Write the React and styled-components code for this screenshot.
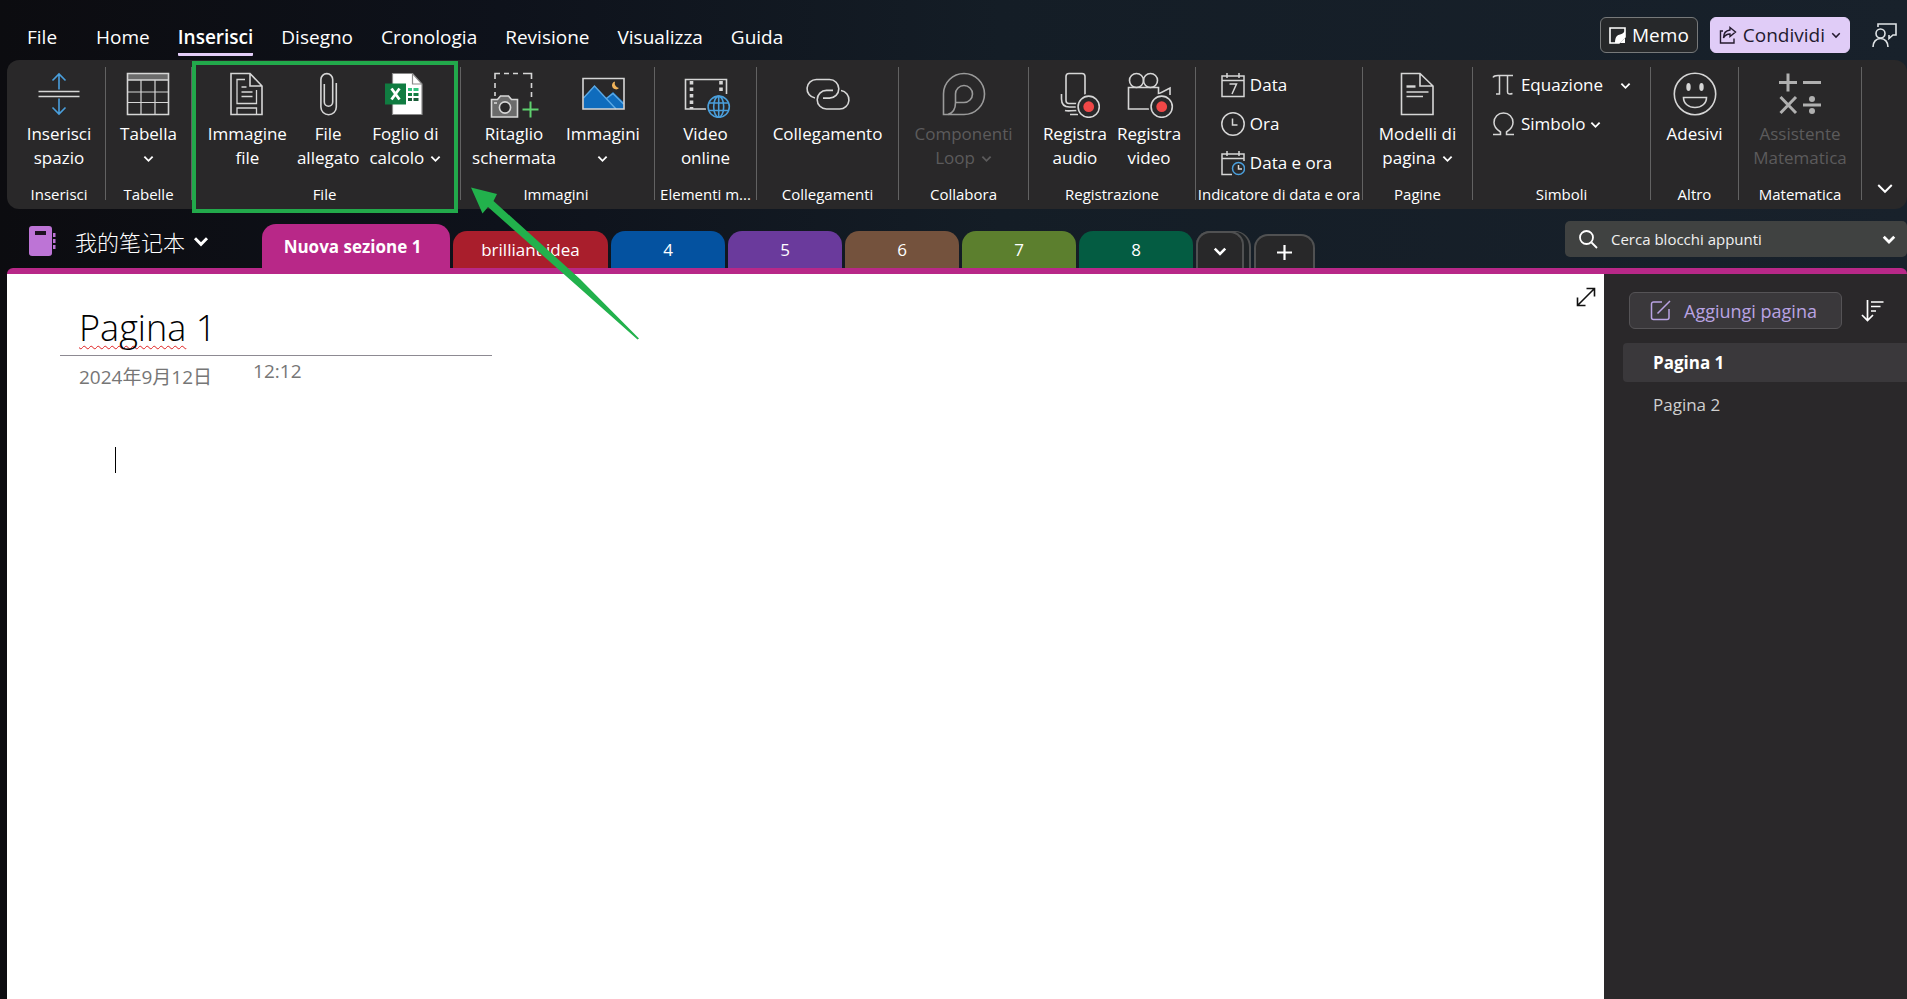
import React from 'react'
import styled, {createGlobalStyle} from 'styled-components'

const GlobalStyle = createGlobalStyle`
    * {
        box-sizing: border-box;
    }

    body {
        margin: 0;
        background: linear-gradient(90deg, #0c0c10 0, #0e121b 500px, #141d26 1000px, #18212b 1907px);
        font-family: "Open Sans", "Noto Sans", "Noto Sans CJK SC", sans-serif;
        color: #fff;
    }

    button, input {
        font: inherit;
        color: inherit;
        border: 0;
        background: none;
        padding: 0;
        margin: 0;
    }

    svg {
        display: block;
        flex: none;
    }
`

/* ---------- icons ---------- */

const Chevron = ({size = 12, weight = 2}) => (
    <svg width={size} height={size} viewBox="0 0 12 12" fill="none" stroke="currentColor" strokeWidth={weight}>
        <path d="M1.5 4 6 8.5 10.5 4"/>
    </svg>
)

const BigIcon = ({children, color = '#d6d6d6'}) => (
    <svg width="50" height="46" viewBox="-1 0 50 46" fill="none" stroke={color} strokeWidth="1.6">
        {children}
    </svg>
)

const SmallIcon = ({children}) => (
    <svg width="24" height="26" viewBox="0 0 24 26" fill="none" stroke="#d6d6d6" strokeWidth="1.5">
        {children}
    </svg>
)

const RecordDot = ({cx}) => (
    <g>
        <circle cx={cx} cy="34.7" r="13" fill="#292829" stroke="none"/>
        <circle cx={cx} cy="34.7" r="10.6"/>
        <circle cx={cx} cy="34.7" r="5.4" fill="#f04747" stroke="none"/>
    </g>
)

const SpaceIcon = () => (
    <BigIcon>
        <path d="M3.5 19.5h41M3.5 24.5h41"/>
        <path stroke="#4a9fdc" d="M24 17.500V2M17.500 8.500 24 2l6.500 6.500M24 26.500V42M17.500 35.500 24 42l6.500-6.500"/>
    </BigIcon>
)

const TableIcon = () => (
    <BigIcon>
        <path d="M4 2h40v6H4z" fill="#6b6b6b" stroke="none"/>
        <path strokeWidth="1.2" d="M17 8v34M31 8v34M4 20h40M4 30.500h40"/>
        <path d="M3.500 1.500h41v41h-41zM3.500 8h41"/>
    </BigIcon>
)

const PrintoutIcon = () => (
    <BigIcon>
        <path d="M8 1.500h19L39 14v28.500H8zM27 1.500V14h12"/>
        <path strokeWidth="1.300" d="M22 7.500h-8v24h19.500V18M18.500 15h5M18.500 20h11M18.500 24.500h11M14 42v-6h19.500v6"/>
    </BigIcon>
)

const ClipIcon = () => (
    <BigIcon>
        <path d="M32.300 11v24a7.700 7.700 0 0 1-15.400 0V7.500a5.900 5.900 0 0 1 11.800 0V30a4.200 4.200 0 0 1-8.400 0V12"/>
    </BigIcon>
)

const ExcelIcon = () => (
    <BigIcon>
        <path d="M11.500 1.500h20L41 12v30.500H11.500z" fill="#fff" stroke="#8a8a8a" strokeWidth="1.200"/>
        <path d="M31.500 1.500V12H41" stroke="#8a8a8a" strokeWidth="1.200"/>
        <path d="M27 17.500h4M32.500 17.500h5" stroke="#33c481" strokeWidth="3"/>
        <path d="M27 22.500h4M32.500 22.500h5" stroke="#107c41" strokeWidth="3"/>
        <path d="M27 27.500h4M32.500 27.500h5" stroke="#185c37" strokeWidth="3"/>
        <path d="M4 11.500h21v21H4z" fill="#107c41" stroke="none"/>
        <path d="M10.500 16.500l8 11M18.500 16.500l-8 11" stroke="#fff" strokeWidth="2.800"/>
    </BigIcon>
)

const ClippingIcon = () => (
    <BigIcon>
        <path d="M5 7V1.500h5M14 1.500h5M23 1.500h5M33 1.500h8.500V7M5 11v5M5 20v4M41.500 11v5M41.500 20v5"/>
        <path d="M1.500 27.500h6l3-3.500h8l3 3.500h6v17.500h-26z" fill="#6b6b6b"/>
        <circle cx="15" cy="35.500" r="5.600" fill="#292829"/>
        <path d="M4 31h3"/>
        <path stroke="#5fd16f" strokeWidth="2" d="M40.500 29.500v16M32.500 37.500h16"/>
    </BigIcon>
)

const PictureIcon = () => (
    <BigIcon>
        <path d="M4.500 26 15.500 14 27 26l7-6 10.500 10v7h-40z" fill="#0f6cbd" stroke="none"/>
        <path d="M4.500 26 15.500 14 37 37M27.500 26.500l6.500-5L44.500 32" stroke="#5aa9e6" strokeWidth="1.400"/>
        <path d="M36 9.500a4 4 0 1 0 4 6.500 5 5 0 0 1-4-6.500z" fill="#f0b35a" stroke="none"/>
        <path d="M4 6.500h41V37H4z"/>
    </BigIcon>
)

const OnlineVideoIcon = () => (
    <BigIcon>
        <path d="M44.500 22V7.500h-41V37H24"/>
        <path d="M9.500 9v28" strokeWidth="3.600" strokeDasharray="3.500 3"/>
        <path d="M39 9v12" strokeWidth="3.600" strokeDasharray="3.500 3"/>
        <circle cx="36.700" cy="34.700" r="13" fill="#292829" stroke="none"/>
        <g stroke="#4a9fdc">
            <circle cx="36.700" cy="34.700" r="10.600"/>
            <ellipse cx="36.700" cy="34.700" rx="5" ry="10.600"/>
            <path d="M36.700 24v21.400M27 31h19.400M27 38.500h19.400"/>
        </g>
    </BigIcon>
)

const LinkIcon = () => (
    <BigIcon>
        <path d="M11 26A9.300 9.300 0 0 1 12.500 7.500h13a9.300 9.300 0 0 1 0 18.600H19"/>
        <path d="M37 18.500a9.300 9.300 0 0 1-1.500 18.500h-13a9.300 9.300 0 0 1 0-18.600H29"/>
    </BigIcon>
)

const LoopIcon = () => (
    <BigIcon color="#9a9a9a">
        <path d="M3.500 42.500V22A20.500 20.500 0 1 1 24 42.500z"/>
        <path d="M24 30.500h-8.500V22A8.500 8.500 0 1 1 24 30.500M15.500 30.500C15.500 36 13 41 8 42.500"/>
    </BigIcon>
)

const AudioIcon = () => (
    <BigIcon>
        <rect x="15" y="1.500" width="19" height="30" rx="3"/>
        <path d="M10.500 22v5c0 5 3 8 8 8H27M14 38.500c3 1 6 0 12 0M19 42.500h8"/>
        <RecordDot cx={37.7}/>
    </BigIcon>
)

const VideoIcon = () => (
    <BigIcon>
        <circle cx="11.500" cy="8.500" r="7"/>
        <circle cx="25.500" cy="8.500" r="7"/>
        <path d="M24 37H3.500V15.500h30V22L45 16v7"/>
        <RecordDot cx={36.7}/>
    </BigIcon>
)

const TemplateIcon = () => (
    <BigIcon>
        <path d="M8.500 1.500H27L40 14v28.500H8.500zM27 1.500V14h13"/>
        <path d="M13.500 14.500h9" strokeWidth="2.400"/>
        <path d="M13.500 20h22M13.500 24.500H30" strokeWidth="1.300"/>
    </BigIcon>
)

const StickerIcon = () => (
    <BigIcon>
        <circle cx="24" cy="22" r="20.700"/>
        <ellipse cx="17.500" cy="15" rx="2.200" ry="4" fill="#d6d6d6" stroke="none"/>
        <ellipse cx="30.500" cy="15" rx="2.200" ry="4" fill="#d6d6d6" stroke="none"/>
        <path d="M12.500 25.500h23c0 6-5 10-11.500 10s-11.500-4-11.500-10z"/>
    </BigIcon>
)

const MathIcon = () => (
    <BigIcon color="#b0b0b0">
        <g strokeWidth="3">
            <path d="M12 1.500v18M3 10.500h18M27 10.500h18M4.500 25 20 41M20 25 4.500 41M27 33h18"/>
        </g>
        <circle cx="36" cy="27" r="3" fill="#b0b0b0" stroke="none"/>
        <circle cx="36" cy="39" r="3" fill="#b0b0b0" stroke="none"/>
    </BigIcon>
)

const DateIcon = () => (
    <SmallIcon>
        <path d="M1 4h22v20.500H1zM1 8.500h22M6 1v5M18 1v5M8.500 12h7l-4.500 10"/>
    </SmallIcon>
)

const ClockIcon = () => (
    <SmallIcon>
        <circle cx="12" cy="13" r="11.200"/>
        <path d="M11.500 7.500v6.500h5"/>
    </SmallIcon>
)

const DateTimeIcon = () => (
    <SmallIcon>
        <path d="M11 24.500H1V4h22v7M1 8.500h22M6 1v5M18 1v5"/>
        <circle cx="17.500" cy="18.500" r="6" stroke="#4a9fdc"/>
        <path d="M17.500 15v4h3.500"/>
    </SmallIcon>
)

const PiIcon = () => (
    <SmallIcon>
        <path d="M1 5.500C2 3.500 4 3.500 6 3.500h15M7.500 3.500V22H4M15.500 3.500V20c0 2 2 2.500 5 1.500"/>
    </SmallIcon>
)

const OmegaIcon = () => (
    <SmallIcon>
        <path d="M1 23.500h7.500V21C4.500 18.500 2 15.500 2 11.500c0-5.500 4-9.500 9.500-9.500S21 6 21 11.500c0 4-2.500 7-6.500 9.500v2.500H22"/>
    </SmallIcon>
)

const MemoIcon = () => (
    <svg width="17" height="17" viewBox="0 0 17 17">
        <path d="M1 1h15v9l-6 6H1z" fill="none" stroke="#fff" strokeWidth="1.600"/>
        <path d="M16 4v6l-6 6H6C6 9 9 8 11 7.500S15 5.500 16 4z" fill="#fff"/>
        <path d="M16 11v5h-5z" fill="#fff"/>
    </svg>
)

const ShareIcon = () => (
    <svg width="18" height="18" viewBox="0 0 18 18" fill="none" stroke="currentColor" strokeWidth="1.400">
        <path d="M4 5H1.500v12h13.500v-4.500"/>
        <path d="M11 1.500 16.500 6 11 10.500V8C8 8 6 9 4.500 12 4.500 7.500 7 4.500 11 4z"/>
    </svg>
)

const PresenceIcon = () => (
    <svg width="25" height="25" viewBox="0 0 25 25" fill="none" stroke="#dfe3e6" strokeWidth="1.600">
        <path d="M6 4V1h18v11h-3l-4 3.500V12"/>
        <circle cx="8.500" cy="10.500" r="4.500"/>
        <path d="M1 24c0-5 3-8.500 7.500-8.500S16 19 16 24"/>
    </svg>
)

const NotebookIcon = () => (
    <svg width="27" height="30" viewBox="0 0 27 30">
        <rect width="23" height="30" rx="3" fill="#bd74d6"/>
        <rect x="6" y="5" width="11" height="4" fill="#1c1220"/>
        <path d="M24 7h2.500v4H24zM24 13h2.500v4H24zM24 19h2.500v4H24z" fill="#bd74d6"/>
    </svg>
)

const SearchIcon = () => (
    <svg width="19" height="19" viewBox="0 0 19 19" fill="none" stroke="#fff" strokeWidth="1.800">
        <circle cx="7.500" cy="7.500" r="6.500"/>
        <path d="M12.500 12.500 18 18"/>
    </svg>
)

const ExpandIcon = () => (
    <svg width="20" height="20" viewBox="0 0 20 20" fill="none" stroke="#111" strokeWidth="1.600">
        <path d="M1.500 18.500 18.500 1.500M10.500 1.500h8v8M1.500 10.500v8h8"/>
    </svg>
)

const ComposeIcon = () => (
    <svg width="21" height="21" viewBox="0 0 21 21" fill="none" stroke="#b9a3e3" strokeWidth="1.500">
        <path d="M12 2H3.500A2 2 0 0 0 1.500 4v13.500a2 2 0 0 0 2 2H17a2 2 0 0 0 2-2V9M7.500 13.500 20 1"/>
    </svg>
)

const SortIcon = () => (
    <svg width="23" height="22" viewBox="0 0 23 22" fill="none" stroke="#fff" strokeWidth="1.700">
        <path d="M6.500 0v20.500M1 15l5.500 5.500L12 15M10 2h12.500M10 6.500h9.500M10 11h5"/>
    </svg>
)

/* ---------- top bar ---------- */

const TopBar = styled.header`
    display: flex;
    align-items: center;
    height: 60px;
    padding: 10px 10px 0 27px;
`

const Menu = styled.nav`
    display: flex;
    gap: 28px;
    flex-grow: 1;
    align-self: flex-start;
    margin-top: 11px;
`

const MenuItem = styled.button`
    height: 35px;
    font-size: 19px;
    line-height: 31px;
    border-bottom: 3px solid ${p => p.$active ? '#e3cdf8' : 'transparent'};
    border-radius: 1px;
    font-weight: ${p => p.$active ? 600 : 400};

    &:first-child {
        margin-right: 11px;
    }
`

const TopButton = styled.button`
    display: flex;
    align-items: center;
    gap: 6px;
    height: 36px;
    margin-right: 12px;
    padding: 0 8px;
    border: 1px solid ${p => p.$primary ? '#e3cdf8' : '#77797a'};
    border-radius: 6px;
    background: ${p => p.$primary ? '#e0ccf7' : '#26282a'};
    color: ${p => p.$primary ? '#241a2e' : '#fff'};
    font-size: 19px;
    line-height: 24px;
`

const PresenceButton = styled.button`
    margin-left: 10px;
`

/* ---------- ribbon ---------- */

const RibbonBar = styled.section`
    display: flex;
    margin-left: 7px;
    padding-left: 6px;
    height: 149px;
    border-radius: 12px;
    background: #292829;
`

const GroupBox = styled.div`
    position: relative;
    display: flex;
    flex-flow: column;
    align-items: center;
    flex: 0 1 ${p => p.$width}px;
    min-width: 0;
    padding: 12px 0 5px;
`

const Divider = styled.div`
    width: 1px;
    flex: none;
    margin: 7px 0 9px;
    background: #626262;
`

const GroupItems = styled.div`
    display: flex;
    flex-flow: ${p => p.$stacked ? 'column' : 'row'};
    align-items: flex-start;
    gap: ${p => p.$stacked ? '13px' : '10px'};
    flex-grow: 1;
    padding-right: ${p => p.$end || 0}px;
`

const GroupName = styled.div`
    padding-right: ${p => p.$end || 0}px;
    white-space: nowrap;
    font-size: 15px;
    line-height: 20px;
`

const BigButton = styled.button`
    display: flex;
    flex-flow: column;
    align-items: center;
    gap: 4px;
    font-size: 17px;
    line-height: 24px;
    white-space: nowrap;

    &:disabled {
        color: #5c5b5c;
    }
`

const Line = styled.span`
    display: flex;
    align-items: center;
    justify-content: center;
    gap: 6px;
    height: 24px;
`

const Lines = styled.span`
    display: block;
`

const SmallButton = styled.button`
    display: flex;
    align-items: center;
    gap: 5px;
    height: 26px;
    font-size: 17px;
    line-height: 24px;
    white-space: nowrap;
`

const Spacer = styled.span`
    width: 7px;
`

const Highlight = styled.div`
    position: absolute;
    inset: 1px 2px -4px 0;
    border: 4px solid #22a94b;
    pointer-events: none;
`

const RibbonMore = styled.button`
    flex: 1 0 24px;
    display: flex;
    align-items: flex-end;
    justify-content: center;
    padding-bottom: 12px;
`

const Group = ({name, width, end, stacked, marked, children}) => (
    <>
        <GroupBox $width={width}>
            <GroupItems $stacked={stacked} $end={end}>{children}</GroupItems>
            <GroupName $end={stacked ? 0 : end}>{name}</GroupName>
            {marked && <Highlight/>}
        </GroupBox>
        <Divider/>
    </>
)

const Tool = ({icon, lines, drop, disabled}) => (
    <BigButton disabled={disabled}>
        {icon}
        <Lines>
            {
                lines.map((line, i) => (
                    <Line key={i}>
                        {line}
                        {drop && i === lines.length - 1 && <Chevron size={11}/>}
                    </Line>
                ))
            }
        </Lines>
    </BigButton>
)

const Ribbon = () => (
    <RibbonBar>
        <Group name="Inserisci" width={92}>
            <Tool icon={<SpaceIcon/>} lines={['Inserisci', 'spazio']}/>
        </Group>
        <Group name="Tabelle" width={85}>
            <Tool icon={<TableIcon/>} lines={['Tabella', '']} drop/>
        </Group>
        <Group name="File" width={268} end={3} marked>
            <Tool icon={<PrintoutIcon/>} lines={['Immagine', 'file']}/>
            <Tool icon={<ClipIcon/>} lines={['File', 'allegato']}/>
            <Tool icon={<ExcelIcon/>} lines={['Foglio di', 'calcolo']} drop/>
        </Group>
        <Group name="Immagini" width={193} end={3}>
            <Tool icon={<ClippingIcon/>} lines={['Ritaglio', 'schermata']}/>
            <Tool icon={<PictureIcon/>} lines={['Immagini', '']} drop/>
        </Group>
        <Group name="Elementi m..." width={101}>
            <Tool icon={<OnlineVideoIcon/>} lines={['Video', 'online']}/>
        </Group>
        <Group name="Collegamenti" width={141}>
            <Tool icon={<LinkIcon/>} lines={['Collegamento']}/>
        </Group>
        <Group name="Collabora" width={129}>
            <Tool icon={<LoopIcon/>} lines={['Componenti', 'Loop']} drop disabled/>
        </Group>
        <Group name="Registrazione" width={166}>
            <Tool icon={<AudioIcon/>} lines={['Registra', 'audio']}/>
            <Tool icon={<VideoIcon/>} lines={['Registra', 'video']}/>
        </Group>
        <Group name="Indicatore di data e ora" width={166} end={5} stacked>
            <SmallButton><DateIcon/>Data</SmallButton>
            <SmallButton><ClockIcon/>Ora</SmallButton>
            <SmallButton><DateTimeIcon/>Data e ora</SmallButton>
        </Group>
        <Group name="Pagine" width={109}>
            <Tool icon={<TemplateIcon/>} lines={['Modelli di', 'pagina']} drop/>
        </Group>
        <Group name="Simboli" width={177} stacked>
            <SmallButton><PiIcon/>Equazione<Spacer/><Chevron size={11}/></SmallButton>
            <SmallButton><OmegaIcon/>Simbolo<Chevron size={11}/></SmallButton>
        </Group>
        <Group name="Altro" width={87}>
            <Tool icon={<StickerIcon/>} lines={['Adesivi']}/>
        </Group>
        <Group name="Matematica" width={122}>
            <Tool icon={<MathIcon/>} lines={['Assistente', 'Matematica']} disabled/>
        </Group>
        <RibbonMore aria-label="Opzioni barra multifunzione"><Chevron size={18} weight={1.3}/></RibbonMore>
    </RibbonBar>
)

/* ---------- section tabs ---------- */

const SectionBar = styled.div`
    display: flex;
    align-items: flex-end;
    height: 59px;
    margin-left: 7px;
`

const Notebook = styled.button`
    display: flex;
    align-items: center;
    align-self: center;
    width: 255px;
    padding: 5px 0 0 22px;
    font-family: "Noto Sans CJK SC", sans-serif;
    font-size: 22px;
    font-weight: 300;
    line-height: 28px;
`

const NotebookName = styled.span`
    margin: 0 8px 0 19px;
`

const Tabs = styled.div`
    display: flex;
    align-items: flex-end;
    gap: 3px;
    flex-grow: 1;
`

const Tab = styled.button`
    width: ${p => p.$width || 114}px;
    height: ${p => p.$active ? 44 : 37}px;
    padding-right: ${p => p.$active ? 7 : 0}px;
    border-radius: 14px 14px 0 0;
    background: ${p => p.$color};
    font-size: 17px;
    font-weight: ${p => p.$active ? 700 : 400};
    white-space: nowrap;
`

const OutlineTab = styled.button`
    display: flex;
    align-items: center;
    justify-content: center;
    width: ${p => p.$width}px;
    height: ${p => p.$height}px;
    border: 2px solid #505152;
    border-bottom: 0;
    border-radius: 14px 14px 0 0;
    background: #282829;
`

const TabStack = styled.div`
    height: 37px;
    padding-right: 5px;
    border-top: 1px solid #505152;
    border-right: 2px solid #505152;
    border-radius: 14px 16px 0 0;
    background: #1f2326;

    button {
        margin-top: -1px;
    }
`

const SearchBox = styled.label`
    display: flex;
    align-items: center;
    align-self: flex-start;
    flex: 0 1 342px;
    height: 36px;
    margin-top: 12px;
    padding: 0 11px 0 14px;
    border-radius: 5px;
    background: #404241;

    input {
        flex: 1 1 0;
        min-width: 0;
        margin-left: 13px;
        font-size: 15px;
        line-height: 20px;
        outline: 0;
    }

    input::placeholder {
        color: #f0f0f0;
        opacity: 1;
    }
`

const sections = [
    {name: 'brilliant idea', color: '#a91e2c', width: 155},
    {name: '4', color: '#0452a0'},
    {name: '5', color: '#6a3a9c'},
    {name: '6', color: '#74523d'},
    {name: '7', color: '#5c7f2e'},
    {name: '8', color: '#045c42'},
]

const Sections = () => (
    <SectionBar>
        <Notebook>
            <NotebookIcon/>
            <NotebookName>我的笔记本</NotebookName>
            <Chevron size={16} weight={2.2}/>
        </Notebook>
        <Tabs>
            <Tab $active $width={188} $color="#b82888">Nuova sezione 1</Tab>
            {
                sections.map(s => (
                    <Tab key={s.name} $color={s.color} $width={s.width}>{s.name}</Tab>
                ))
            }
            <TabStack>
                <OutlineTab $width={48} $height={37} aria-label="Altre sezioni"><Chevron size={14} weight={2.2}/></OutlineTab>
            </TabStack>
            <OutlineTab $width={61} $height={34} aria-label="Nuova sezione">
                <svg width="15" height="15" viewBox="0 0 15 15" stroke="#fff" strokeWidth="2.200"><path d="M7.500 0v15M0 7.500h15"/></svg>
            </OutlineTab>
        </Tabs>
        <SearchBox>
            <SearchIcon/>
            <input type="search" placeholder="Cerca blocchi appunti"/>
            <Chevron size={14} weight={2.4}/>
        </SearchBox>
    </SectionBar>
)

/* ---------- page ---------- */

const Workspace = styled.div`
    display: flex;
    min-height: calc(100vh - 268px);
    margin-left: 7px;
    border-top: 6px solid #b82888;
    border-radius: 6px 6px 0 0;
    background: #2a282a;
`

const Paper = styled.main`
    display: flex;
    align-items: flex-start;
    justify-content: space-between;
    flex: 1 1 0;
    padding: 13px 8px 0 53px;
    background: #fff;
    color: #000;
`

const Note = styled.article`
    flex: 0 1 432px;
`

const Title = styled.h1`
    margin: 0;
    padding: 17px 19px 0;
    height: 69px;
    border-bottom: 1px solid #8d8a92;
    font-size: 36px;
    font-weight: 300;
    line-height: 48px;
    white-space: nowrap;

    span {
        text-decoration: underline wavy #e02020 1px;
        text-decoration-skip-ink: none;
        text-underline-offset: 4px;
    }
`

const Stamp = styled.div`
    display: flex;
    gap: 41px;
    padding: 3px 19px 0;
    font-size: 19px;
    line-height: 24px;
    color: #767676;

    time:first-child {
        padding-top: 6px;
    }
`

const Caret = styled.div`
    width: 1px;
    height: 26px;
    margin: 58px 0 0 55px;
    background: #000;
`

const Side = styled.aside`
    flex: 0 0 303px;
    padding: 18px 0 0 19px;
`

const SideTools = styled.div`
    display: flex;
    align-items: center;
    gap: 19px;
    padding-left: 6px;
    margin-bottom: 14px;
`

const AddPage = styled.button`
    display: flex;
    align-items: center;
    gap: 13px;
    width: 213px;
    height: 37px;
    padding-left: 20px;
    border: 1px solid #555356;
    border-radius: 6px;
    background: #3a383b;
    color: #b9a3e3;
    font-size: 18px;
    white-space: nowrap;
`

const PageLink = styled.a`
    display: block;
    height: 39px;
    margin-bottom: 3px;
    padding-left: 30px;
    border-radius: 4px 0 0 4px;
    background: ${p => p.$active ? '#3a383b' : 'transparent'};
    color: ${p => p.$active ? '#fff' : '#cfcfcf'};
    font-size: 17px;
    font-weight: ${p => p.$active ? 700 : 400};
    line-height: 39px;
    text-decoration: none;
`

const Arrow = styled.svg`
    position: absolute;
    left: 470px;
    top: 187px;
    pointer-events: none;
`

const menu = ['File', 'Home', 'Inserisci', 'Disegno', 'Cronologia', 'Revisione', 'Visualizza', 'Guida']

const App = () => (
    <>
        <GlobalStyle/>
        <TopBar>
            <Menu>
                {
                    menu.map(name => (
                        <MenuItem key={name} $active={name === 'Inserisci'}>{name}</MenuItem>
                    ))
                }
            </Menu>
            <TopButton><MemoIcon/>Memo</TopButton>
            <TopButton $primary><ShareIcon/>Condividi<Chevron size={10} weight={1.8}/></TopButton>
            <PresenceButton aria-label="Commenti"><PresenceIcon/></PresenceButton>
        </TopBar>
        <Ribbon/>
        <Sections/>
        <Workspace>
            <Paper>
                <Note>
                    <Title><span>Pagina</span> 1</Title>
                    <Stamp>
                        <time>2024年9月12日</time>
                        <time>12:12</time>
                    </Stamp>
                    <Caret/>
                </Note>
                <button aria-label="Schermo intero"><ExpandIcon/></button>
            </Paper>
            <Side>
                <SideTools>
                    <AddPage><ComposeIcon/>Aggiungi pagina</AddPage>
                    <button aria-label="Ordina pagine"><SortIcon/></button>
                </SideTools>
                <PageLink href="#pagina-1" $active>Pagina 1</PageLink>
                <PageLink href="#pagina-2">Pagina 2</PageLink>
            </Side>
        </Workspace>
        <Arrow width="170" height="154" viewBox="0 0 170 154">
            <path d="M1 0.500 27 7 23.500 14 110 92 169 151.500 167.500 152.500 105 97 18 20 12.500 26.500z" fill="#22b14c"/>
        </Arrow>
    </>
)

export default App
